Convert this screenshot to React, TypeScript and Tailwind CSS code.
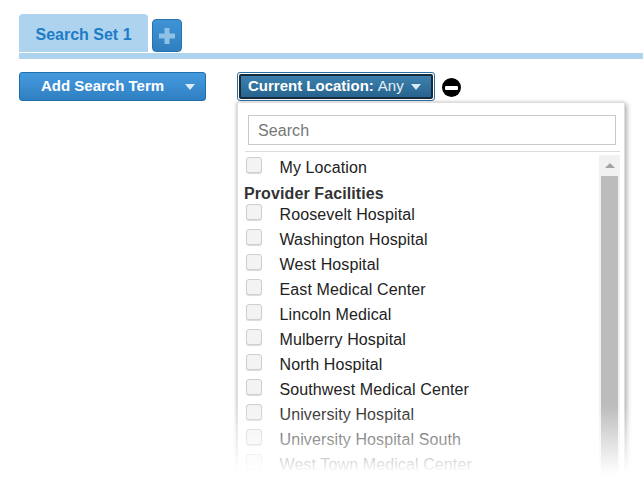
const facilities = [
  'Roosevelt Hospital',
  'Washington Hospital',
  'West Hospital',
  'East Medical Center',
  'Lincoln Medical',
  'Mulberry Hospital',
  'North Hospital',
  'Southwest Medical Center',
  'University Hospital',
  'University Hospital South',
  'West Town Medical Center',
];

function Caret() {
  return <span className="w-0 h-0 border-x-[5px] border-x-transparent border-t-[6px] border-t-[#dcebf7]" />;
}

function Row({ label }: { label: string }) {
  return (
    <div className="h-[25px] flex items-center shrink-0">
      <span className="w-4 h-4 ml-[1px] -mt-[5px] rounded-[3px] border border-[#cfcfcf] bg-[#f3f3f3] shadow-[0_1px_1px_rgba(0,0,0,0.15)] shrink-0" />
      <span className="ml-[17.5px] text-[16px] leading-[25px] tracking-[0.11px] text-[#222]">{label}</span>
    </div>
  );
}

export default function App() {
  return (
    <div className="w-[643px] h-[477px] overflow-hidden bg-white pt-[14px] font-['Liberation_Sans',Arial,sans-serif]">
      <div className="flex items-end pl-[19px] gap-1 h-[38px]">
        <div className="w-[129px] h-[38px] pt-1 bg-[#aed3ee] rounded-t-[4px] flex items-center justify-center text-[16px] font-bold text-[#1d7cc6]">
          Search Set 1
        </div>
        <div className="w-[30px] h-[33px] rounded-[4px] border border-[#2a72ad] bg-gradient-to-b from-[#3f94d6] to-[#2f7fbf] flex items-center justify-center">
          <svg width="16" height="16" viewBox="0 0 16 16" className="fill-[#8fc0e6]">
            <path d="M5.5 0h5v5.5H16v5h-5.500V16h-5v-5.500H0v-5h5.500z" />
          </svg>
        </div>
      </div>
      <div className="h-[6px] ml-[19px] mt-[1px] bg-[#aed3ee]" />

      <div className="flex items-start pl-[19px] mt-[13px]">
        <div className="w-[187px] h-[29px] rounded-[3px] border border-[#1f6fad] bg-gradient-to-b from-[#459ade] to-[#2f80c2] flex items-center text-white text-[15px] font-bold">
          <span className="ml-[21px]">Add Search Term</span>
          <span className="ml-auto mr-[10px] flex"><Caret /></span>
        </div>

        <div className="ml-[31px] flex flex-col relative">
          <div className="flex items-center">
            <div className="w-[198px] h-[29px] rounded-[3px] border border-[#2a6f9f] p-[1px]">
              <div className="h-full rounded-[2px] border-2 border-[#152a3a] bg-gradient-to-b from-[#3d80ad] to-[#27648f] flex items-center text-white text-[15px]">
                <span className="ml-[7px] font-bold">Current Location:</span>
                <span className="ml-1 text-[#e4eef5]">Any</span>
                <span className="ml-auto mr-[10px] flex"><Caret /></span>
              </div>
            </div>
            <div className="ml-[7px] mt-[2px] w-[19px] h-[19px] rounded-full bg-black flex items-center justify-center">
              <span className="w-[13px] h-1 bg-white rounded-[1px]" />
            </div>
          </div>

          <div className="w-[388px] h-[375px] mt-[1px] border border-[#dedede] bg-white shadow-[2px_2px_5px_rgba(0,0,0,0.3),-1px_0_3px_rgba(0,0,0,0.15)] overflow-hidden pl-[7px] pr-[4px]">
            <div className="mx-[3px] mt-3 pt-[2px] h-[30px] border border-[#c9c9c9] w-[368px] pl-[9px] flex items-center text-[16px] text-[#777] tracking-[0.08px]">
              Search
            </div>
            <div className="h-px bg-[#dddddd] mt-[6px] w-[375px]" />
            <div className="flex mt-[3px]">
              <div className="w-[354px] shrink-0 flex flex-col">
                <Row label="My Location" />
                <div className="h-[17px] mt-[5px] ml-[-1px] text-[16px] leading-[17px] font-bold tracking-[0.1px] text-[#333]">Provider Facilities</div>
                {facilities.map((f) => (
                  <Row key={f} label={f} />
                ))}
              </div>
              <div className="w-[21px] shrink-0 h-[340px] bg-[#f1f1f1] flex flex-col items-center px-[2px]">
                <span className="mt-[8px] w-0 h-0 border-x-[5px] border-x-transparent border-b-[5px] border-b-[#a3a3a3] shrink-0" />
                <div className="mt-[8px] w-full flex-1 bg-[#bcbcbc]" />
              </div>
            </div>
          </div>
          {/* fade sits over the panel and its shadow */}
          <div className="absolute -left-2 -right-3 bottom-0 h-[72px] bg-gradient-to-b from-white/0 via-white/95 via-90% to-white" />
        </div>
      </div>
    </div>
  );
}
